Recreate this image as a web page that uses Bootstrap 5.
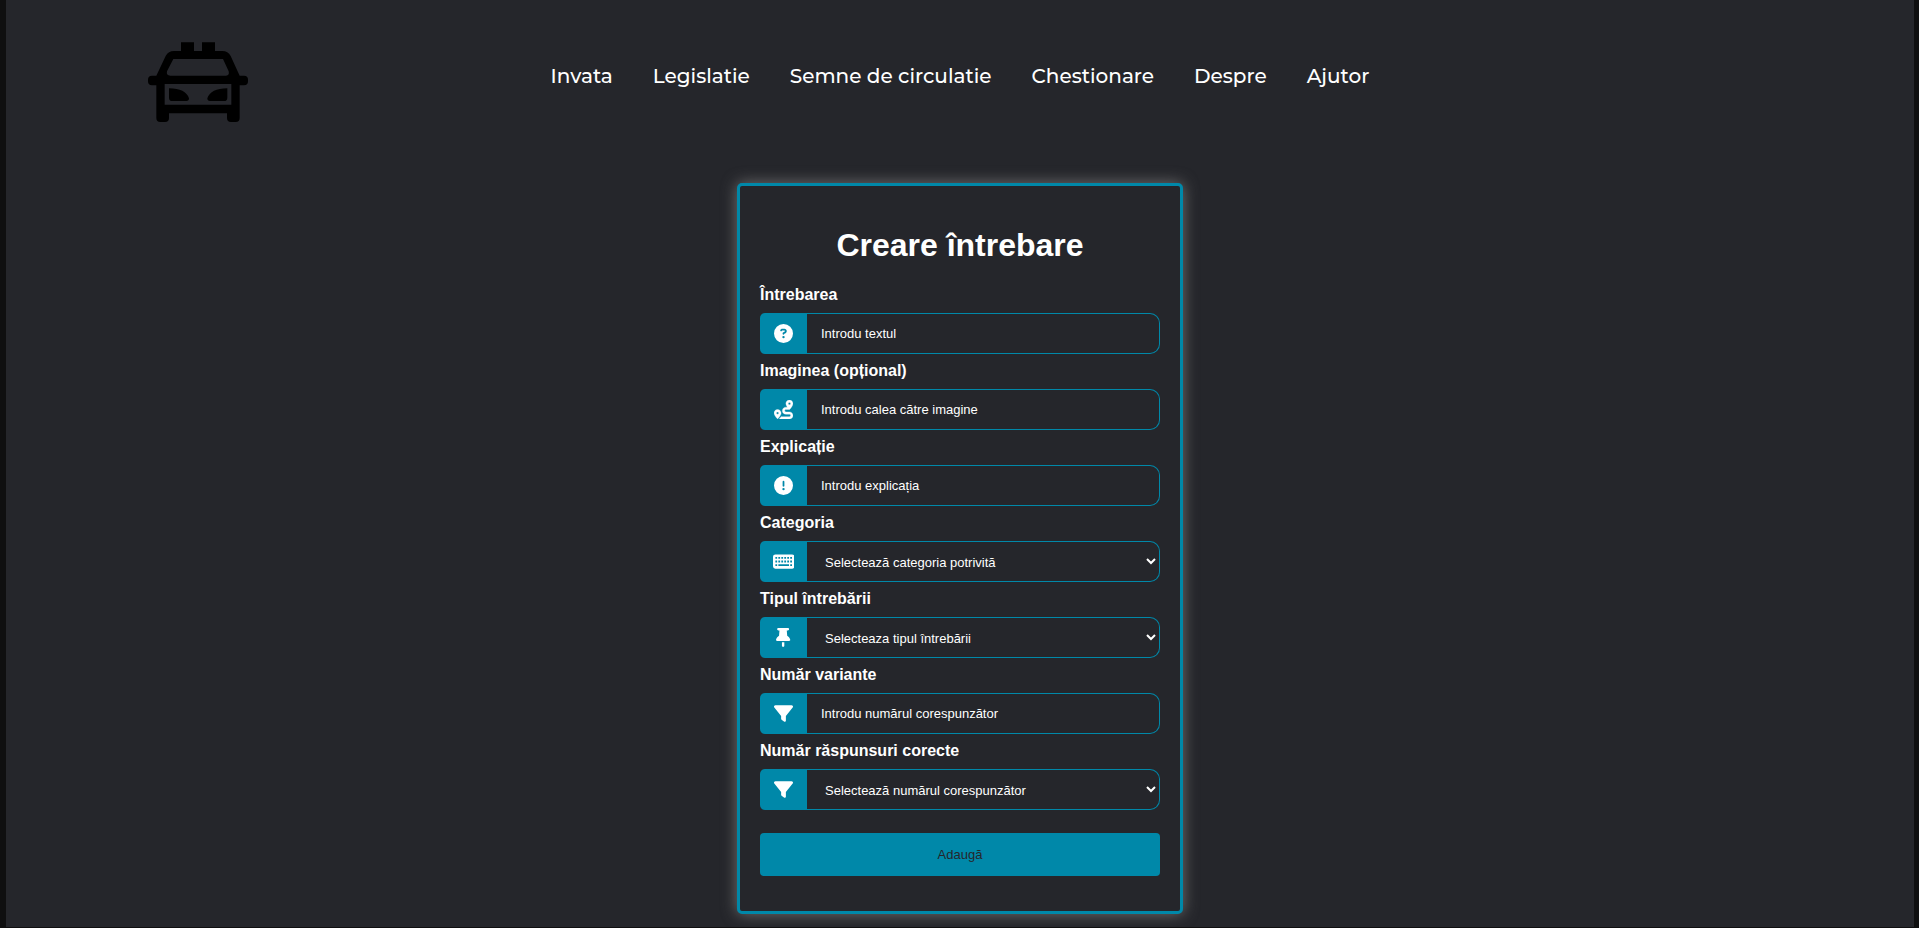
<!DOCTYPE html>
<html lang="ro">
<head>
<meta charset="utf-8">
<meta name="viewport" content="width=device-width, initial-scale=1">
<title>Creare întrebare</title>
<link href="https://cdn.jsdelivr.net/npm/bootstrap@5.3.0/dist/css/bootstrap.min.css" rel="stylesheet">
<style>
:root { --teal: #0088a9; --ink: #25262b; }
body {
  background: var(--ink);
  color: #fff;
  font-family: "Liberation Sans", Arial, sans-serif;
  border: solid #0f0f10;
  border-width: 0 5px 1px 6px;
  min-height: 100vh;
}
.site-header { display: grid; grid-template-columns: 1fr auto 1fr; padding: 42px 142px 36px; }
.site-logo svg { display: block; width: 100px; height: 80px; }
.site-menu { gap: 40px; padding-bottom: 12px; }
.site-menu a {
  color: #fff;
  text-decoration: none;
  font: 500 20px/30px Montserrat, Inter, sans-serif;
}
.question-form {
  width: 100%;
  max-width: 446px;
  margin-top: 25px;
  margin-bottom: 13px;
  padding: 40px 20px 35px;
  border: 3px solid var(--teal);
  border-radius: 5px;
  box-shadow: 0 0 15px #707070;
  background: var(--ink);
}
.question-form h1 { font-size: 32px; font-weight: 700; line-height: 38px; margin-bottom: 19px; }
.field-label { display: block; font-size: 16px; font-weight: 700; line-height: 24px; margin-bottom: 6px; }
.field-box { height: 41px; margin-bottom: 5px; }
.field-icon { width: 47px; background: var(--teal); border-radius: 5px 0 0 5px; }
.field-icon svg { height: 19px; fill: #fff; }
.field-control {
  min-width: 0;
  background: var(--ink);
  color: #fff;
  border: 1px solid var(--teal);
  border-left: 0;
  border-radius: 0 10px 10px 0;
  font-size: 13px;
  padding: 0 14px;
}
select.field-control { padding: 2px 0 0 14px; }
.field-control::placeholder { color: #fff; opacity: 1; }
.submit-button {
  height: 43px;
  margin-top: 23px;
  background: var(--teal);
  color: var(--ink);
  border: 0;
  border-radius: 4px;
  font-size: 13px;
}
</style>
</head>
<body>
<header class="site-header align-items-center">
  <a class="site-logo" href="#" aria-label="Acasă">
    <svg viewBox="54 36 300 240" aria-hidden="true">
      <path fill-rule="evenodd" d="M153 37h39v26h24V37h39v26h22q17 0 25 15l27 59h13q12 0 12 12v5q0 12-12 12h-13v98q0 12-12 12h-14q-12 0-12-12v-14H117v14q0 12-12 12H91q-12 0-12-12v-98H66q-12 0-12-12v-5q0-12 12-12h13l28-59q8-15 25-15h21zM130 87l-19 37q-3 13 10 13h167q11 0 8-13l-17-37zM104 162v62h200v-62z"/>
      <path d="M117 175q50 0 60 30q0 8-8 8h-42q-10 0-10-10zM292 175q-50 0-60 30q0 8 8 8h42q10 0 10-10z"/>
    </svg>
  </a>
  <nav aria-label="Principal">
    <ul class="site-menu list-unstyled d-flex flex-wrap mb-0">
      <li><a href="#">Invata</a></li>
      <li><a href="#">Legislatie</a></li>
      <li><a href="#">Semne de circulatie</a></li>
      <li><a href="#">Chestionare</a></li>
      <li><a href="#">Despre</a></li>
      <li><a href="#">Ajutor</a></li>
    </ul>
  </nav>
</header>

<main class="d-flex justify-content-center">
  <form class="question-form">
    <h1 class="text-center">Creare întrebare</h1>

    <label class="field-label" for="question">Întrebarea</label>
    <div class="field-box d-flex">
      <span class="field-icon d-flex align-items-center justify-content-center"><svg viewBox="0 0 512 512" aria-hidden="true"><path d="M256 512A256 256 0 1 0 256 0a256 256 0 1 0 0 512zM169.800 165.300c7.900-22.300 29.100-37.300 52.800-37.300h58.300c34.900 0 63.100 28.300 63.100 63.100c0 22.600-12.100 43.500-31.700 54.800L280 264.400c-.2 13-10.900 23.600-24 23.600c-13.300 0-24-10.700-24-24V250.500c0-8.600 4.600-16.500 12.100-20.800l44.300-25.400c4.700-2.700 7.600-7.700 7.600-13.100c0-8.400-6.800-15.100-15.100-15.100H222.600c-3.400 0-6.400 2.100-7.500 5.300l-.4 1.200c-4.400 12.500-18.200 19-30.600 14.600s-19-18.200-14.600-30.600l.4-1.200zM224 352a32 32 0 1 1 64 0 32 32 0 1 1-64 0z"/></svg></span>
      <input class="field-control flex-fill" id="question" type="text" placeholder="Introdu textul">
    </div>

    <label class="field-label" for="image">Imaginea (opțional)</label>
    <div class="field-box d-flex">
      <span class="field-icon d-flex align-items-center justify-content-center"><svg viewBox="0 0 512 512" stroke="#fff" stroke-width="8" aria-hidden="true"><path d="M512 96c0 50.200-59.100 125.100-84.600 155c-3.800 4.400-9.400 6.100-14.500 5H320c-17.700 0-32 14.300-32 32s14.300 32 32 32h96c53 0 96 43 96 96s-43 96-96 96H139.600c8.700-9.900 19.300-22.600 30-36.800c6.300-8.400 12.800-17.600 19-27.200H416c17.700 0 32-14.300 32-32s-14.300-32-32-32H320c-53 0-96-43-96-96s43-96 96-96h39.800c-21-31.500-39.800-67.700-39.800-96c0-53 43-96 96-96s96 43 96 96zM117.100 489.100c-3.800 4.300-7.200 8.100-10.100 11.300l-1.800 2-.2-.2c-6 4.600-14.600 4-20-1.800C59.800 473 0 402.500 0 352c0-53 43-96 96-96s96 43 96 96c0 30-21.100 67-43.500 97.900c-10.700 14.700-21.700 28-30.800 38.500l-.6 .7zM128 352a32 32 0 1 0 -64 0 32 32 0 1 0 64 0zM416 128a32 32 0 1 0 0-64 32 32 0 1 0 0 64z"/></svg></span>
      <input class="field-control flex-fill" id="image" type="text" placeholder="Introdu calea către imagine">
    </div>

    <label class="field-label" for="explanation">Explicație</label>
    <div class="field-box d-flex">
      <span class="field-icon d-flex align-items-center justify-content-center"><svg viewBox="0 0 512 512" aria-hidden="true"><path d="M256 512A256 256 0 1 0 256 0a256 256 0 1 0 0 512zm0-384c13.300 0 24 10.700 24 24V264c0 13.300-10.700 24-24 24s-24-10.700-24-24V152c0-13.300 10.700-24 24-24zM224 352a32 32 0 1 1 64 0 32 32 0 1 1-64 0z"/></svg></span>
      <input class="field-control flex-fill" id="explanation" type="text" placeholder="Introdu explicația">
    </div>

    <label class="field-label" for="category">Categoria</label>
    <div class="field-box d-flex">
      <span class="field-icon d-flex align-items-center justify-content-center"><svg viewBox="0 0 576 512" aria-hidden="true"><path fill-rule="evenodd" d="M64 64h448q64 0 64 64v256q0 64-64 64H64q-64 0-64-64V128q0-64 64-64zM64 136v48h48v-48zM144 136v48h48v-48zM224 136v48h48v-48zM304 136v48h48v-48zM384 136v48h48v-48zM464 136v48h48v-48zM64 232v48h48v-48zM144 232v48h48v-48zM224 232v48h48v-48zM304 232v48h48v-48zM384 232v48h48v-48zM464 232v48h48v-48zM64 328v48h48v-48zM144 328v48h288v-48zM464 328v48h48v-48z"/></svg></span>
      <select class="field-control flex-fill" id="category"><option>Selectează categoria potrivită</option></select>
    </div>

    <label class="field-label" for="type">Tipul întrebării</label>
    <div class="field-box d-flex">
      <span class="field-icon d-flex align-items-center justify-content-center"><svg viewBox="0 0 384 512" aria-hidden="true"><path d="M32 32C32 14.300 46.300 0 64 0H320c17.700 0 32 14.300 32 32s-14.300 32-32 32H290.500l11.400 148.200c36.700 19.900 65.700 53.200 79.500 94.700l1 3c3.300 9.800 1.600 20.500-4.400 28.800s-15.700 13.300-26 13.300H32c-10.300 0-19.900-4.900-26-13.300s-7.700-19.100-4.400-28.800l1-3c13.800-41.500 42.800-74.800 79.500-94.700L93.500 64H64C46.300 64 32 49.700 32 32zM160 384h64v96c0 17.700-14.300 32-32 32s-32-14.300-32-32V384z"/></svg></span>
      <select class="field-control flex-fill" id="type"><option>Selecteaza tipul întrebării</option></select>
    </div>

    <label class="field-label" for="variants">Număr variante</label>
    <div class="field-box d-flex">
      <span class="field-icon d-flex align-items-center justify-content-center"><svg viewBox="0 0 512 512" aria-hidden="true"><path d="M3.900 54.900C10.500 40.900 24.500 32 40 32H472c15.500 0 29.500 8.900 36.100 22.900s4.600 30.500-5.200 42.500L320 320.900V448c0 12.100-6.800 23.200-17.700 28.600s-23.800 4.300-33.500-3l-64-48c-8.100-6-12.800-15.500-12.800-25.600V320.900L9 97.300C-.7 85.400-2.800 68.800 3.900 54.900z"/></svg></span>
      <input class="field-control flex-fill" id="variants" type="text" placeholder="Introdu numărul corespunzător">
    </div>

    <label class="field-label" for="answers">Număr răspunsuri corecte</label>
    <div class="field-box d-flex mb-0">
      <span class="field-icon d-flex align-items-center justify-content-center"><svg viewBox="0 0 512 512" aria-hidden="true"><path d="M3.900 54.900C10.500 40.900 24.500 32 40 32H472c15.500 0 29.500 8.900 36.100 22.900s4.600 30.500-5.200 42.500L320 320.900V448c0 12.100-6.800 23.200-17.700 28.600s-23.800 4.300-33.500-3l-64-48c-8.100-6-12.800-15.500-12.800-25.600V320.900L9 97.300C-.7 85.400-2.800 68.800 3.900 54.900z"/></svg></span>
      <select class="field-control flex-fill" id="answers"><option>Selectează numărul corespunzător</option></select>
    </div>

    <button class="submit-button w-100" type="submit">Adaugă</button>
  </form>
</main>
<script src="https://cdn.jsdelivr.net/npm/bootstrap@5.3.0/dist/js/bootstrap.bundle.min.js"></script>
</body>
</html>
